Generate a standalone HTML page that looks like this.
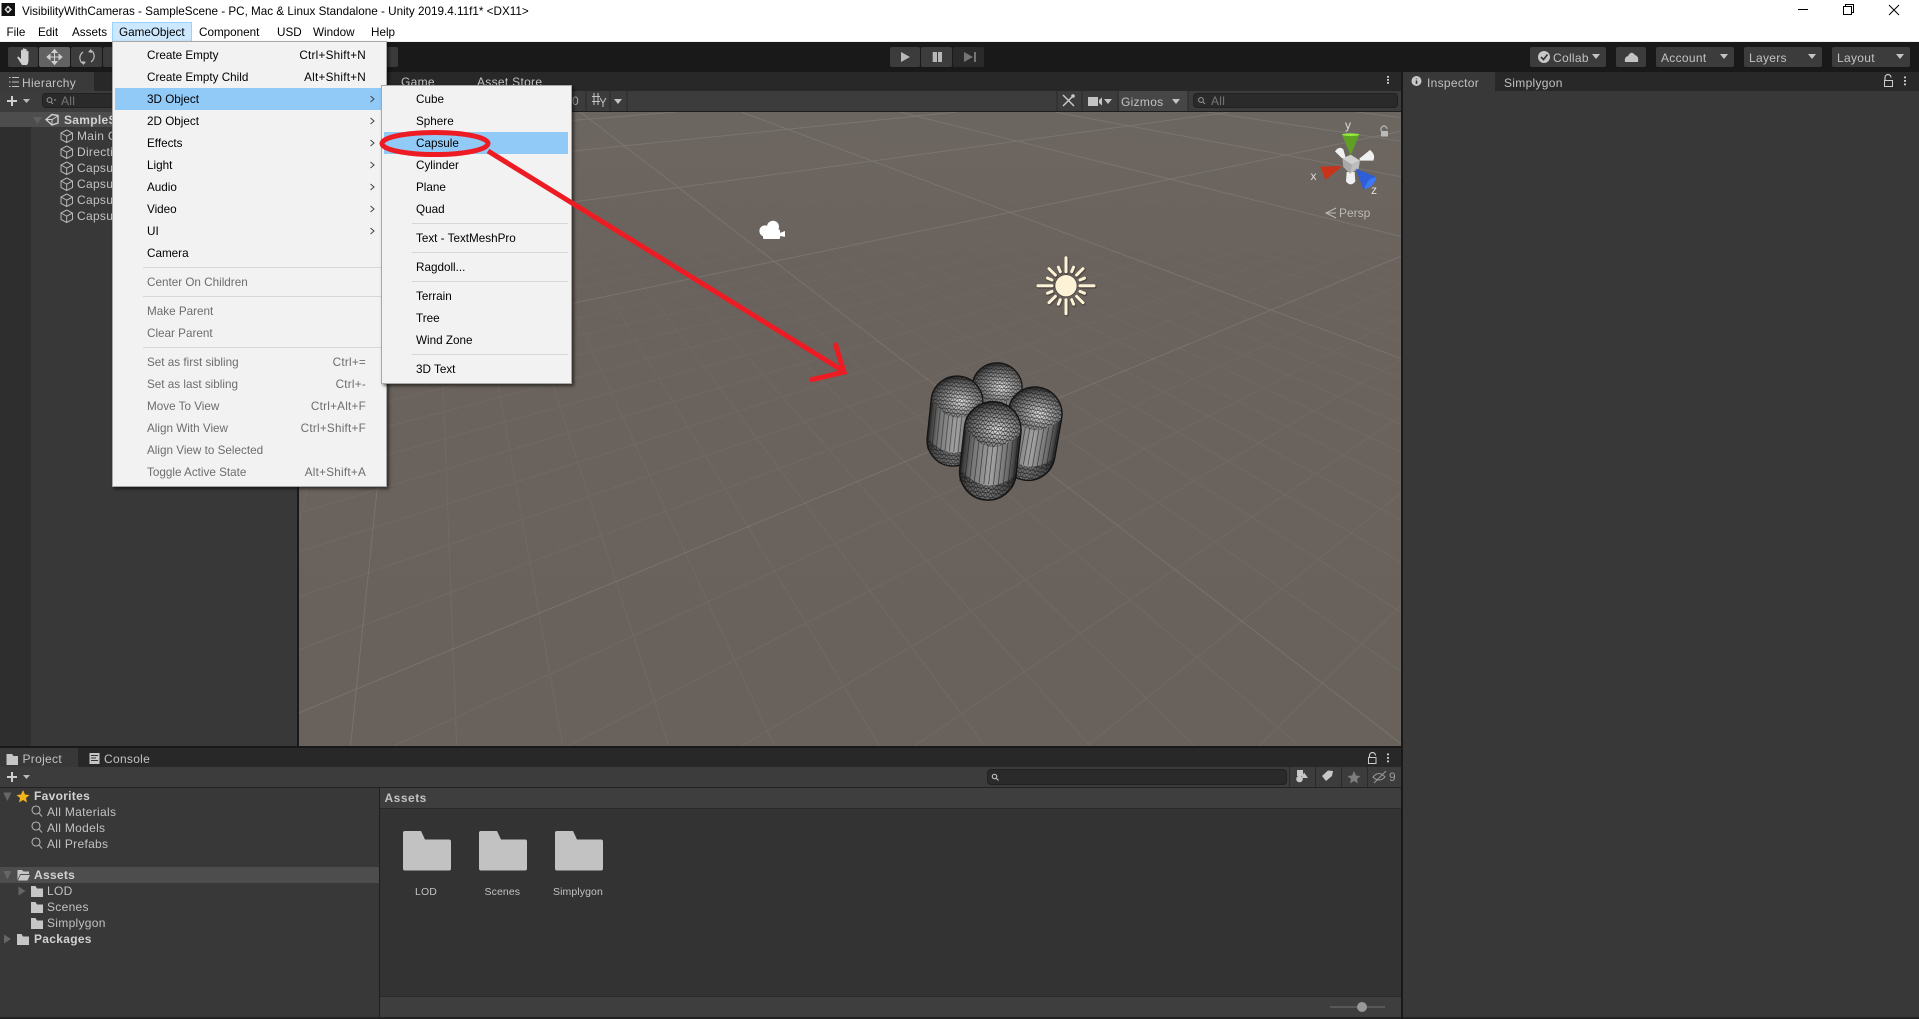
<!DOCTYPE html>
<html><head><meta charset="utf-8"><title>Unity</title>
<style>
html,body{margin:0;padding:0;background:#222;width:1919px;height:1019px;overflow:hidden}
body{position:relative;font-family:"Liberation Sans",sans-serif}
.b{position:absolute}
.t{position:absolute;white-space:nowrap;line-height:16px;height:16px;font-size:12px;letter-spacing:.3px;color:#c2c2c2}
.k{font-weight:bold;color:#d2d2d2}
.m{position:absolute;white-space:nowrap;line-height:16px;height:16px;font-size:11.7px;color:#000;margin-top:1px}
.r{letter-spacing:.25px}
.d{color:#6d6d6d}
.s{position:absolute;height:1px;background:#d7d7d7}
.tri{position:absolute;width:0;height:0;border-left:4.5px solid transparent;border-right:4.5px solid transparent;border-top:5px solid #c4c4c4}
.btn{position:absolute;top:47px;height:20px;background:#3c3c3c;border-radius:2px}
svg{position:absolute;left:0;top:0}
</style></head><body>

<!-- title / menu bar -->
<div class="b" style="left:0;top:0;width:1919px;height:41px;background:#fff"></div>
<div class="b" style="left:0;top:41px;width:1919px;height:1px;background:#f0f0f0"></div>
<div class="m" style="left:22px;top:3px">VisibilityWithCameras - SampleScene - PC, Mac &amp; Linux Standalone - Unity 2019.4.11f1* &lt;DX11&gt;</div>
<div class="m" style="left:6.5px;top:24px">File</div>
<div class="m" style="left:38px;top:24px">Edit</div>
<div class="m" style="left:72px;top:24px">Assets</div>
<div class="b" style="left:112px;top:22px;width:78px;height:18px;background:#cce8ff;border:1px solid #99d1ff"></div>
<div class="m" style="left:119px;top:24px">GameObject</div>
<div class="m" style="left:199px;top:24px">Component</div>
<div class="m" style="left:277px;top:24px">USD</div>
<div class="m" style="left:313px;top:24px">Window</div>
<div class="m" style="left:371px;top:24px">Help</div>

<!-- main toolbar -->
<div class="b" style="left:0;top:42px;width:1919px;height:30px;background:#191919"></div>
<div class="btn" style="left:8px;width:30px"></div>
<div class="btn" style="left:39px;width:31px;background:#626262"></div>
<div class="btn" style="left:71px;width:31px"></div>
<div class="btn" style="left:103px;width:295px;background:#3a3a3a"></div>
<div class="btn" style="left:890px;width:30px"></div>
<div class="btn" style="left:921px;width:31px"></div>
<div class="btn" style="left:953px;width:31px;background:#2a2a2a"></div>
<div class="btn" style="left:1530px;width:76px"></div>
<div class="t" style="left:1553px;top:50px">Collab</div>
<div class="tri" style="left:1592px;top:54px"></div>
<div class="btn" style="left:1616px;width:30px"></div>
<div class="btn" style="left:1656px;width:78px"></div>
<div class="t" style="left:1661px;top:50px">Account</div>
<div class="tri" style="left:1720px;top:54px"></div>
<div class="btn" style="left:1744px;width:78px"></div>
<div class="t" style="left:1749px;top:50px">Layers</div>
<div class="tri" style="left:1808px;top:54px"></div>
<div class="btn" style="left:1832px;width:78px"></div>
<div class="t" style="left:1837px;top:50px">Layout</div>
<div class="tri" style="left:1896px;top:54px"></div>

<!-- hierarchy panel -->
<div class="b" style="left:0;top:72px;width:1919px;height:19px;background:#282828"></div>
<div class="b" style="left:0;top:72px;width:94px;height:19px;background:#3a3a3a"></div>
<div class="t" style="left:22px;top:75px">Hierarchy</div>
<div class="b" style="left:0;top:91px;width:298px;height:21px;background:#3c3c3c"></div>
<div class="b" style="left:42px;top:93px;width:250px;height:15px;background:#2a2a2a;border:1px solid #212121;border-radius:4px;box-sizing:border-box"></div>
<div class="t" style="left:61px;top:93px;color:#777">All</div>
<div class="b" style="left:0;top:112px;width:298px;height:634px;background:#383838"></div>
<div class="b" style="left:0;top:112px;width:31px;height:634px;background:#2e2e2e"></div>
<div class="b" style="left:0;top:112px;width:298px;height:15px;background:#4d4d4d"></div>
<div class="t k" style="left:64px;top:112px">SampleScene</div>
<div class="t" style="left:77px;top:128px">Main Camera</div>
<div class="t" style="left:77px;top:144px">Directional Light</div>
<div class="t" style="left:77px;top:160px">Capsule</div>
<div class="t" style="left:77px;top:176px">Capsule</div>
<div class="t" style="left:77px;top:192px">Capsule</div>
<div class="t" style="left:77px;top:208px">Capsule</div>
<div class="b" style="left:297px;top:91px;width:2px;height:655px;background:#191919"></div>

<!-- scene toolbar -->
<div class="b" style="left:299px;top:91px;width:1102px;height:20px;background:#3c3c3c"></div>
<div class="b" style="left:299px;top:111px;width:1102px;height:1px;background:#1e1e1e"></div>
<div class="t" style="left:401px;top:74px">Game</div>
<div class="t" style="left:477px;top:74px">Asset Store</div>
<div class="t" style="left:572px;top:93px;color:#aaa">0</div>
<div class="b" style="left:1119px;top:91px;width:69px;height:20px;background:#464646"></div>
<div class="t" style="left:1121px;top:94px">Gizmos</div>
<div class="tri" style="left:1172px;top:99px"></div>
<div class="tri" style="left:1104px;top:99px"></div>
<div class="tri" style="left:614px;top:99px"></div>
<div class="b" style="left:1193px;top:93px;width:205px;height:15px;background:#2a2a2a;border:1px solid #212121;border-radius:4px;box-sizing:border-box"></div>
<div class="t" style="left:1211px;top:93px;color:#777">All</div>

<!-- right / inspector -->
<div class="b" style="left:1401px;top:72px;width:2px;height:947px;background:#191919"></div>
<div class="b" style="left:1403px;top:91px;width:516px;height:926px;background:#383838"></div>
<div class="b" style="left:1403px;top:72px;width:92px;height:19px;background:#383838"></div>
<div class="t" style="left:1427px;top:75px">Inspector</div>
<div class="t" style="left:1504px;top:75px">Simplygon</div>

<!-- project panel -->
<div class="b" style="left:0;top:746px;width:1401px;height:2px;background:#191919"></div>
<div class="b" style="left:0;top:748px;width:1401px;height:19px;background:#282828"></div>
<div class="b" style="left:0;top:748px;width:78px;height:19px;background:#383838"></div>
<div class="t" style="left:22.5px;top:751px">Project</div>
<div class="t" style="left:104px;top:751px">Console</div>
<div class="b" style="left:0;top:767px;width:1401px;height:20px;background:#3c3c3c"></div>
<div class="b" style="left:0;top:787px;width:1401px;height:1px;background:#232323"></div>
<div class="b" style="left:987px;top:769px;width:300px;height:16px;background:#2a2a2a;border:1px solid #212121;border-radius:4px;box-sizing:border-box"></div>
<div class="b" style="left:1289px;top:767px;width:1px;height:20px;background:#2a2a2a"></div>
<div class="b" style="left:1315px;top:767px;width:1px;height:20px;background:#2a2a2a"></div>
<div class="b" style="left:1341px;top:767px;width:1px;height:20px;background:#2a2a2a"></div>
<div class="b" style="left:1367px;top:767px;width:1px;height:20px;background:#2a2a2a"></div>
<div class="t" style="left:1389px;top:769px;color:#999">9</div>
<div class="b" style="left:0;top:788px;width:379px;height:229px;background:#383838"></div>
<div class="b" style="left:379px;top:788px;width:1px;height:229px;background:#1f1f1f"></div>
<div class="b" style="left:380px;top:788px;width:1021px;height:20px;background:#3e3e3e"></div>
<div class="b" style="left:380px;top:808px;width:1021px;height:1px;background:#2a2a2a"></div>
<div class="b" style="left:380px;top:809px;width:1021px;height:188px;background:#333"></div>
<div class="b" style="left:380px;top:996px;width:1021px;height:1px;background:#2a2a2a"></div>
<div class="b" style="left:380px;top:997px;width:1021px;height:20px;background:#3e3e3e"></div>
<div class="t k" style="left:384.5px;top:790px;letter-spacing:.5px;font-weight:bold;color:#c2c2c2">Assets</div>
<div class="t k" style="left:34px;top:788px">Favorites</div>
<div class="t" style="left:47px;top:804px">All Materials</div>
<div class="t" style="left:47px;top:820px">All Models</div>
<div class="t" style="left:47px;top:836px">All Prefabs</div>
<div class="b" style="left:0;top:867px;width:379px;height:16px;background:#4d4d4d"></div>
<div class="t k" style="left:34px;top:867px">Assets</div>
<div class="t" style="left:47px;top:883px">LOD</div>
<div class="t" style="left:47px;top:899px">Scenes</div>
<div class="t" style="left:47px;top:915px">Simplygon</div>
<div class="t k" style="left:34px;top:931px">Packages</div>
<div class="t" style="left:415px;top:884px;font-size:10.5px;letter-spacing:.1px">LOD</div>
<div class="t" style="left:484.5px;top:884px;font-size:10.5px;letter-spacing:.1px">Scenes</div>
<div class="t" style="left:553px;top:884px;font-size:10.5px;letter-spacing:.1px">Simplygon</div>

<!-- scene + icons -->
<svg width="1919" height="1019" viewBox="0 0 1919 1019">
<defs>
<clipPath id="sc"><rect x="299" y="112" width="1102" height="634"/></clipPath>
<linearGradient id="minor" gradientUnits="userSpaceOnUse" x1="0" y1="170" x2="0" y2="430"><stop offset="0" stop-color="#fff" stop-opacity="0"/><stop offset="1" stop-color="#fff" stop-opacity=".045"/></linearGradient>
<linearGradient id="bg" x1="0" y1="0" x2="0" y2="1"><stop offset="0" stop-color="#6c6661"/><stop offset=".3" stop-color="#6a625c"/><stop offset="1" stop-color="#69625c"/></linearGradient>
<linearGradient id="bodyG" x1="0" x2="1" y1="0" y2="0"><stop offset="0" stop-color="#2b2b2b"/><stop offset=".2" stop-color="#757575"/><stop offset=".55" stop-color="#a2a2a2"/><stop offset=".85" stop-color="#6a6a6a"/><stop offset="1" stop-color="#262626"/></linearGradient>
<radialGradient id="domeG" cx=".58" cy=".62" r=".62"><stop offset="0" stop-color="#e8e8e8"/><stop offset=".35" stop-color="#a6a6a6"/><stop offset=".8" stop-color="#606060"/><stop offset="1" stop-color="#2e2e2e"/></radialGradient>
<pattern id="mesh" width="5" height="4" patternUnits="userSpaceOnUse"><path d="M0 0H5M0 0L2.5 4L5 0M0 4H5" stroke="#141414" stroke-width=".5" fill="none"/></pattern>
<pattern id="stripes" width="4.6" height="10" patternUnits="userSpaceOnUse"><path d="M2 0V10" stroke="#1a1a1a" stroke-width=".65" stroke-opacity=".8"/></pattern>
<g id="cap">
<rect x="-27" y="-27" width="54" height="94" rx="27" fill="url(#bodyG)"/>
<rect x="-27" y="4" width="54" height="48" fill="url(#stripes)"/>
<path d="M-27 0A27 27 0 0 1 27 0Q0 32 -27 0Z" fill="url(#domeG)"/>
<path d="M-27 0A27 27 0 0 1 27 0Q0 32 -27 0Z" fill="url(#mesh)"/>
<path d="M-27 40Q0 66 27 40A27 27 0 0 1 -27 40Z" fill="#2e2e2e" fill-opacity=".4"/>
<path d="M-27 40Q0 66 27 40A27 27 0 0 1 -27 40Z" fill="url(#mesh)"/>
<rect x="-27" y="-27" width="54" height="94" rx="27" fill="none" stroke="#141414" stroke-width="1.4"/>
</g>
</defs>

<g clip-path="url(#sc)">
<rect x="299" y="112" width="1102" height="634" fill="url(#bg)"/>
<g id="grid" fill="none"></g>
<use href="#cap" transform="translate(997 388) rotate(4) scale(.93)"/>
<use href="#cap" transform="translate(957 402) rotate(6) scale(.96)"/>
<use href="#cap" transform="translate(1035 414) rotate(10)"/>
<use href="#cap" transform="translate(992.7 430) rotate(6.5) scale(1.05)"/>

<!-- sun -->
<g transform="translate(1066 285.7)" stroke-linecap="round">
<g stroke="#2e2a26" stroke-opacity=".45" stroke-width="4.4" transform="translate(.6 .8)">
<path d="M0-14V-28M0 14V28M-14 0H-28M14 0H28M10.6-10.6L17-17M-10.6-10.6L-17-17M10.6 10.6L17 17M-10.6 10.6L-17 17M5.7-14L7.6-18.5M-5.7-14L-7.6-18.5M5.7 14L7.6 18.5M-5.7 14L-7.6 18.5M14-5.7L18.5-7.6M-14-5.7L-18.5-7.6M14 5.7L18.5 7.6M-14 5.7L-18.5 7.6"/>
</g>
<circle r="11.5" fill="#2e2a26" fill-opacity=".5"/>
<g stroke="#fdf1d6" stroke-width="3">
<path d="M0-14V-28M0 14V28M-14 0H-28M14 0H28M10.6-10.6L17-17M-10.6-10.6L-17-17M10.6 10.6L17 17M-10.6 10.6L-17 17M5.7-14L7.6-18.5M-5.7-14L-7.6-18.5M5.7 14L7.6 18.5M-5.7 14L-7.6 18.5M14-5.7L18.5-7.6M-14-5.7L-18.5-7.6M14 5.7L18.5 7.6M-14 5.7L-18.5 7.6"/>
</g>
<circle r="10.7" fill="#fdf1d6"/>
</g>

<!-- camera gizmo -->
<g fill="#fff">
<circle cx="765" cy="231" r="5.6"/><circle cx="773" cy="226.8" r="6"/>
<rect x="763" y="229.5" width="17" height="9.5" rx="1"/>
<path d="M779 233.3L785 231V236.8L779 236Z"/>
</g>

<!-- orientation gizmo -->
<g transform="translate(1310 112) scale(.3333)">
<path d="M75 118Q88 100 100 112L108 140L95 138Z" fill="#f0f0f0"/>
<path d="M148 140L180 114Q198 128 190 146L150 146Z" fill="#f0f0f0"/>
<path d="M110 180H134L136 208Q122 226 108 208Z" fill="#f0f0f0"/>
<path d="M97 140L122 128L150 146L125 158Z" fill="#cfcfcf"/>
<path d="M97 140L125 158L120 185L100 165Z" fill="#a9a9a9"/>
<path d="M125 158L150 146L146 170L120 185Z" fill="#bdbdbd"/>
<path d="M96 68H148L122 130Z" fill="#5f9f24"/>
<ellipse cx="122" cy="68" rx="26" ry="4" fill="#94ea3c"/>
<path d="M97 162L30 164L47 204Z" fill="#c9331a"/>
<path d="M137 170L196 194Q200 214 160 232Z" fill="#2e5ed8"/>
<path d="M163 232Q196 222 198 196Q172 196 163 232Z" fill="#3d78f0"/>
</g>
<text x="1345" y="129" font-family="Liberation Sans" font-size="12" fill="#ddd">y</text>
<text x="1310.5" y="180" font-family="Liberation Sans" font-size="12" fill="#ddd">x</text>
<text x="1371" y="194" font-family="Liberation Sans" font-size="12" fill="#ddd">z</text>
<text x="1339" y="217" font-family="Liberation Sans" font-size="12" fill="#bdb9b5">Persp</text>
<path d="M1336 208L1326 213L1336 218M1336 213H1326" stroke="#bdb9b5" fill="none"/>
<path d="M1381 131V129a3 3 0 0 1 6 0" stroke="#bbb" fill="none" stroke-width="1.2"/><rect x="1381" y="131" width="7" height="5.5" fill="#bbb"/>
</g>

<!-- toolbar icons -->
<path d="M18 66L13.5 59Q13 57.5 14.6 57.6L17 60V51.5Q17.9 50 18.8 51.5V57V50Q19.8 48.6 20.7 50V57V50.5Q21.7 49 22.6 50.5V57.5V52.5Q23.6 51 24.5 52.5V61Q24.5 64 23 66Z" transform="translate(4 -1)" fill="#d0d0d0"/>
<g fill="#cfcfcf" stroke="#cfcfcf" stroke-width="1">
<path d="M54.5 49.5L57 52.5H52ZM54.5 64.5L57 61.5H52ZM47 57L50 54.5V59.5ZM62 57L59 54.5V59.5Z"/><path d="M54.5 52V62M49.5 57H59.5"/>
</g>
<path d="M83 52Q78 56 81 62L84 64M91 62Q96 58 93 52L90 50" stroke="#bdbdbd" fill="none" stroke-width="1.2"/><path d="M91 49L92 53L88 52ZM83 65L82 61L86 62Z" fill="#bdbdbd"/>
<path d="M901 52L910 57L901 62Z" fill="#b8b8b8"/>
<path d="M932.7 52H937V62H932.7ZM938 52H942V62H938Z" fill="#b8b8b8"/>
<path d="M964 52L973 57L964 62ZM974 52H976V62H974Z" fill="#747474"/>

<!-- win controls -->
<path d="M1798 9.5H1808" stroke="#000"/>
<path d="M1843.5 8.5H1851.5V16.5H1843.5ZM1845.5 8.5V6.5H1853.5V14.5H1851.5" stroke="#000" fill="none" transform="translate(0 -2)"/>
<path d="M1889 5L1899 15M1899 5L1889 15" stroke="#000"/>
<rect x="1.5" y="3" width="13.5" height="13" fill="#111"/><path d="M8 5.5L12 9.5L8 13.5L4.5 9.5Z" fill="#ddd"/><circle cx="8" cy="9.5" r="1.4" fill="#111"/>

<!-- collab / cloud -->
<circle cx="1544" cy="57" r="6" fill="#c8c8c8"/><path d="M1541 57L1543.5 59.5L1547.5 54.5" stroke="#333" stroke-width="1.6" fill="none"/>
<path d="M1625 62Q1624 57 1628 56Q1631 50 1635 55Q1639 56 1638 62Z" fill="#c4c4c4"/>

<!-- hierarchy icons -->
<path d="M9 77.5H10.5M12 77.5H19M9 82H10.5M12 82H19M9 86.5H10.5M12 86.5H19" stroke="#bdbdbd"/>
<path d="M12 96V106M7 101H17" stroke="#d0d0d0" stroke-width="2"/>
<path d="M23 99H30L26.5 103Z" fill="#bbb"/>
<circle cx="49.5" cy="100" r="2.4" fill="none" stroke="#999"/><path d="M51 102L53 104M54 100H56" stroke="#999"/>
<path d="M33 117H42L37.5 124Z" fill="#5f5f5f"/>
<path d="M46 119.5L52 114.5L58 115.5V123L52 125Z" fill="none" stroke="#d0d0d0" stroke-width="1.4"/><path d="M52 119.5L58 116M52 119.5V124.5M52 119.5H47" stroke="#d0d0d0"/>
<g id="cube" fill="none" stroke="#b8b8b8">
<path d="M66.7 130L72.5 133V139.5L66.7 142.5L61 139.5V133ZM61 133L66.7 136.2L72.5 133M66.7 136.2V142.5"/>
<path transform="translate(0 16)" d="M66.7 130L72.5 133V139.5L66.7 142.5L61 139.5V133ZM61 133L66.7 136.2L72.5 133M66.7 136.2V142.5"/>
<path transform="translate(0 32)" d="M66.7 130L72.5 133V139.5L66.7 142.5L61 139.5V133ZM61 133L66.7 136.2L72.5 133M66.7 136.2V142.5"/>
<path transform="translate(0 48)" d="M66.7 130L72.5 133V139.5L66.7 142.5L61 139.5V133ZM61 133L66.7 136.2L72.5 133M66.7 136.2V142.5"/>
<path transform="translate(0 64)" d="M66.7 130L72.5 133V139.5L66.7 142.5L61 139.5V133ZM61 133L66.7 136.2L72.5 133M66.7 136.2V142.5"/>
<path transform="translate(0 80)" d="M66.7 130L72.5 133V139.5L66.7 142.5L61 139.5V133ZM61 133L66.7 136.2L72.5 133M66.7 136.2V142.5"/>
</g>

<!-- scene toolbar icons -->
<path d="M1057 91V111M1082 91V111M1118 91V111M1188 91V111" stroke="#2a2a2a"/>
<path d="M1063 95L1074 106M1074 95L1063 106" stroke="#c8c8c8" stroke-width="1.5"/><circle cx="1073" cy="96" r="1.8" fill="#c8c8c8"/>
<rect x="1088" y="97" width="10" height="9" fill="#c4c4c4"/><path d="M1099 100L1102 97.5V105.5L1099 103Z" fill="#c4c4c4"/>
<circle cx="1201" cy="100" r="2.4" fill="none" stroke="#999"/><path d="M1203 102L1205 104" stroke="#999"/>
<path d="M1388 76v1.8M1388 79v1.8M1388 82v1.8" stroke="#ccc" stroke-width="2"/>
<path d="M586 91V111M610 91V111M627 91V111" stroke="#2a2a2a"/>
<path d="M592 96.5H600M592 101.5H600M594 93V105M598 93V105M600 98L603 103L606 98M603 103V107" stroke="#c4c4c4" fill="none"/>

<!-- inspector icons -->
<circle cx="1416.5" cy="81" r="5" fill="#c8c8c8"/><path d="M1416.5 78.5v.8M1416.5 80.5v3.4" stroke="#333" stroke-width="1.6"/>
<path d="M1885 80V77.5a3 3 0 0 1 6 0" fill="none" stroke="#ccc" stroke-width="1.2"/><rect x="1884.5" y="80.5" width="8" height="6" fill="none" stroke="#ccc"/>
<path d="M1905 76.5v1.8M1905 80v1.8M1905 83.5v1.8" stroke="#ccc" stroke-width="2"/>

<!-- project icons -->
<path d="M6.5 754H12L13.5 756H18V765H6.5Z" fill="#c6c6c6"/>
<rect x="89.5" y="753" width="10" height="11" fill="#c6c6c6"/><path d="M91 755.5H98M91 758H96M91 760.5H98" stroke="#333"/>
<path d="M12 772V782M7 777H17" stroke="#d0d0d0" stroke-width="2"/><path d="M23 775H30L26.5 779Z" fill="#bbb"/>
<path d="M1376 757V755.5a3 3 0 0 1 6 0" transform="translate(-6.5 0)" fill="none" stroke="#ccc" stroke-width="1.2"/><rect x="1368.5" y="757.5" width="7.5" height="6" fill="none" stroke="#ccc"/>
<path d="M1388 753.5v1.8M1388 757v1.8M1388 760.5v1.8" stroke="#ccc" stroke-width="2"/>
<circle cx="994.5" cy="776.5" r="2.2" fill="none" stroke="#bbb" stroke-width="1.2"/><path d="M996 778L998.5 780.5" stroke="#bbb" stroke-width="1.2"/>
<path d="M1297 770H1303V776H1297Z" fill="#c8c8c8"/><circle cx="1299.5" cy="779" r="3.3" fill="#c8c8c8"/><path d="M1304 772.5L1308 778H1301.5Z" fill="#c8c8c8"/>
<path d="M1322 776L1328 770.5L1333 771L1332 776L1326 781Z" fill="#c8c8c8"/>
<path d="M1354 771L1356 775.5L1360.5 776L1357 779L1358 783.5L1354 781L1350 783.5L1351 779L1347.5 776L1352 775.5Z" fill="#7d7d7d"/>
<path d="M1373 777Q1379 770 1385 777Q1379 783 1373 777ZM1374 783L1386 771" stroke="#999" fill="none"/>
<path d="M1330 1007H1385" stroke="#585858" stroke-width="2"/><circle cx="1362" cy="1007" r="5" fill="#999"/>

<!-- tree icons -->
<path d="M3.3 792.5H11.4L7.3 801Z" fill="#666"/>
<path d="M23 790L25 794.5L29.5 795L26 798L27 802.5L23 800L19 802.5L20 798L16.5 795L21 794.5Z" fill="#f2b418"/>
<g fill="none" stroke="#b0b0b0" stroke-width="1.1">
<circle cx="36" cy="810" r="4"/><path d="M39 813L42 816.5"/>
<circle cx="36" cy="826" r="4"/><path d="M39 829L42 832.5"/>
<circle cx="36" cy="842" r="4"/><path d="M39 845L42 848.5"/>
</g>
<path d="M3.3 871H11.4L7.3 879.5Z" fill="#666"/>
<path d="M17.5 870H22L23.5 871.5H29V874H20L17.5 880ZM20.5 875H30L27.5 880.5H18Z" fill="#c6c6c6"/>
<path d="M18.5 886.5L25.5 891L18.5 895.5Z" fill="#666"/>
<path d="M4 934.5L11 939L4 943.5Z" fill="#666"/>
<path id="fl" d="M31 886H35.5L37 888.5H43V897H31Z" fill="#c6c6c6"/>
<path d="M31 902H35.5L37 904.5H43V913H31Z" fill="#c6c6c6"/>
<path d="M31 918H35.5L37 920.5H43V929H31Z" fill="#c6c6c6"/>
<path d="M17 934H21.5L23 936.5H29V945H17Z" fill="#c6c6c6"/>
<g fill="#c2c2c2">
<path d="M403 833Q403 831 405 831H421L425 839.5H449Q451 839.5 451 841.5V868.5Q451 870.5 449 870.5H405Q403 870.5 403 868.5Z"/>
<path d="M479 833Q479 831 481 831H497L501 839.5H525Q527 839.5 527 841.5V868.5Q527 870.5 525 870.5H481Q479 870.5 479 868.5Z"/>
<path d="M555 833Q555 831 557 831H573L577 839.5H601Q603 839.5 603 841.5V868.5Q603 870.5 601 870.5H557Q555 870.5 555 868.5Z"/>
</g>
</svg>

<!-- main menu -->
<div class="b" style="left:112px;top:41px;width:273px;height:444px;background:#f2f2f2;border:1px solid #a8a8a8;box-shadow:2px 2px 3px rgba(0,0,0,.55)"></div>
<div class="b" style="left:115px;top:88px;width:267px;height:22px;background:#91c9f7"></div>
<div class="m" style="left:147px;top:47px">Create Empty</div>
<div class="m r" style="right:1553px;top:47px">Ctrl+Shift+N</div>
<div class="m" style="left:147px;top:69px">Create Empty Child</div>
<div class="m r" style="right:1553px;top:69px">Alt+Shift+N</div>
<div class="m" style="left:147px;top:91px">3D Object</div>
<div class="m" style="left:147px;top:113px">2D Object</div>
<div class="m" style="left:147px;top:135px">Effects</div>
<div class="m" style="left:147px;top:157px">Light</div>
<div class="m" style="left:147px;top:179px">Audio</div>
<div class="m" style="left:147px;top:201px">Video</div>
<div class="m" style="left:147px;top:223px">UI</div>
<div class="m" style="left:147px;top:245px">Camera</div>
<div class="s" style="left:143px;top:267px;width:241px"></div>
<div class="m d" style="left:147px;top:274px">Center On Children</div>
<div class="s" style="left:143px;top:296px;width:241px"></div>
<div class="m d" style="left:147px;top:303px">Make Parent</div>
<div class="m d" style="left:147px;top:325px">Clear Parent</div>
<div class="s" style="left:143px;top:347px;width:241px"></div>
<div class="m d" style="left:147px;top:354px">Set as first sibling</div>
<div class="m d r" style="right:1553px;top:354px">Ctrl+=</div>
<div class="m d" style="left:147px;top:376px">Set as last sibling</div>
<div class="m d r" style="right:1553px;top:376px">Ctrl+-</div>
<div class="m d" style="left:147px;top:398px">Move To View</div>
<div class="m d r" style="right:1553px;top:398px">Ctrl+Alt+F</div>
<div class="m d" style="left:147px;top:420px">Align With View</div>
<div class="m d r" style="right:1553px;top:420px">Ctrl+Shift+F</div>
<div class="m d" style="left:147px;top:442px">Align View to Selected</div>
<div class="m d" style="left:147px;top:464px">Toggle Active State</div>
<div class="m d r" style="right:1553px;top:464px">Alt+Shift+A</div>

<!-- sub menu -->
<div class="b" style="left:381px;top:85px;width:189px;height:297px;background:#f2f2f2;border:1px solid #a8a8a8;box-shadow:2px 2px 3px rgba(0,0,0,.55)"></div>
<div class="b" style="left:384px;top:132px;width:184px;height:22px;background:#91c9f7"></div>
<div class="m" style="left:416px;top:91px">Cube</div>
<div class="m" style="left:416px;top:113px">Sphere</div>
<div class="m" style="left:416px;top:135px">Capsule</div>
<div class="m" style="left:416px;top:157px">Cylinder</div>
<div class="m" style="left:416px;top:179px">Plane</div>
<div class="m" style="left:416px;top:201px">Quad</div>
<div class="s" style="left:412px;top:223px;width:156px"></div>
<div class="m" style="left:416px;top:230px">Text - TextMeshPro</div>
<div class="s" style="left:412px;top:252px;width:156px"></div>
<div class="m" style="left:416px;top:259px">Ragdoll...</div>
<div class="s" style="left:412px;top:281px;width:156px"></div>
<div class="m" style="left:416px;top:288px">Terrain</div>
<div class="m" style="left:416px;top:310px">Tree</div>
<div class="m" style="left:416px;top:332px">Wind Zone</div>
<div class="s" style="left:412px;top:354px;width:156px"></div>
<div class="m" style="left:416px;top:361px">3D Text</div>

<!-- overlay annotations -->
<svg width="1919" height="1019" viewBox="0 0 1919 1019" fill="none">
<path d="M370.5 96L374 99L370.5 102M370.5 118L374 121L370.5 124M370.5 140L374 143L370.5 146M370.5 162L374 165L370.5 168M370.5 184L374 187L370.5 190M370.5 206L374 209L370.5 212M370.5 228L374 231L370.5 234" stroke="#444"/>
<ellipse cx="435" cy="143.5" rx="53" ry="11" stroke="#ed1c24" stroke-width="5"/>
<path d="M488 151L845 372M810 380L844 372L835 343" stroke="#ed1c24" stroke-width="5"/>
</svg>

<script>
(function(){
var p=[[678.5,187.6],[872.5,161],[1271.2,310],[989.3,426.8]];
var x0=p[0][0],y0=p[0][1],x1=p[1][0],y1=p[1][1],x2=p[2][0],y2=p[2][1],x3=p[3][0],y3=p[3][1];
var dx1=x1-x2,dx2=x3-x2,sx=x0-x1+x2-x3,dy1=y1-y2,dy2=y3-y2,sy=y0-y1+y2-y3;
var den=dx1*dy2-dx2*dy1,g=(sx*dy2-dx2*sy)/den,h=(dx1*sy-sx*dy1)/den;
var a=x1-x0+g*x1,b=x3-x0+h*x3,c=x0,d=y1-y0+g*y1,e=y3-y0+h*y3,f=y0;
function P(u,v){var s=u,t=(v-1)/2,w=g*s+h*t+1;if(w<.04)return null;return[(a*s+b*t+c)/w,(d*s+e*t+f)/w];}
var mi='',ma='';
function clip(A,B){var t0=0,t1=1,dx=B[0]-A[0],dy=B[1]-A[1];
 var ps=[-dx,dx,-dy,dy],qs=[A[0]-299,1401-A[0],A[1]-112,746-A[1]];
 for(var i=0;i<4;i++){if(ps[i]===0){if(qs[i]<0)return null;continue;}var r=qs[i]/ps[i];if(ps[i]<0){if(r>t1)return null;if(r>t0)t0=r;}else{if(r<t0)return null;if(r<t1)t1=r;}}
 return[[A[0]+t0*dx,A[1]+t0*dy],[A[0]+t1*dx,A[1]+t1*dy]];}
function seg(fn,n){var first=null,last=null;for(var i=0;i<=240;i++){var q=fn(-12+i*.1);if(!q||Math.abs(q[0])>6000||Math.abs(q[1])>6000)continue;if(!first)first=q;last=q;}
 if(first&&last){var c2=clip(first,last);if(!c2)return;var s='M'+c2[0][0].toFixed(1)+' '+c2[0][1].toFixed(1)+'L'+c2[1][0].toFixed(1)+' '+c2[1][1].toFixed(1);if(n%10===0)ma+=s;else mi+=s;}}
for(var k=-120;k<=120;k++){(function(k){seg(function(v){return P(k/10,v)},k);seg(function(u){return P(u,k/10)},k);})(k);}
document.getElementById('grid').innerHTML='<path d="'+mi+'" stroke="url(#minor)"/><path d="'+ma+'" stroke="#fff" stroke-opacity=".1"/>';
})();
</script>
</body></html>
